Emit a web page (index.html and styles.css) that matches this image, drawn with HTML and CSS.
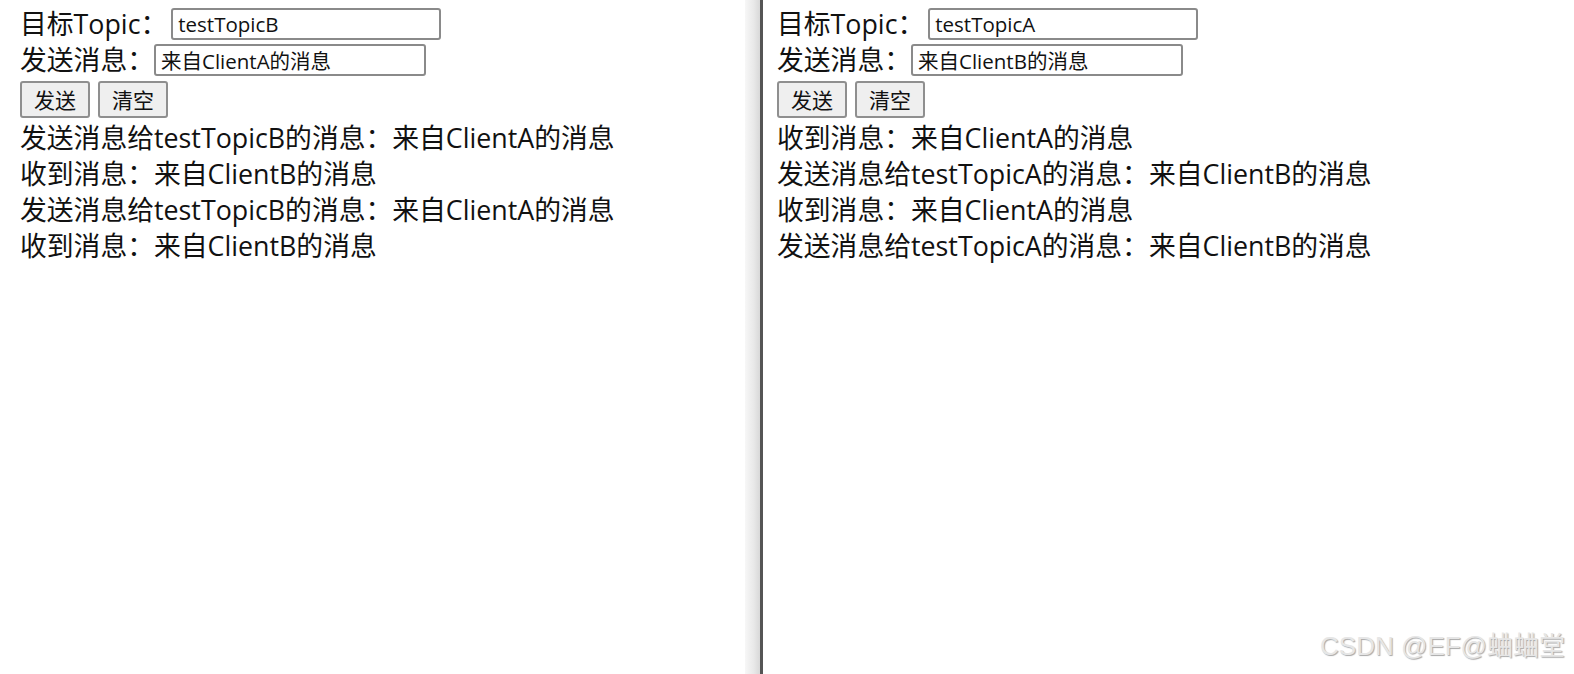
FILE: index.html
```html
<!DOCTYPE html>
<html lang="zh">
  <head>
    <meta charset="utf-8" />
    <meta name="viewport" content="width=device-width, initial-scale=1.0" />
    <title>MQTT Topic</title>
    <link rel="stylesheet" href="styles.css">
  </head>

  <body>
    <div class="screen">
      <!-- ______CLIENT A______ -->
      <section class="client client-a">
        <div class="row">
          <label>目标Topic：</label>
          <input class="topic" type="text" value="testTopicB" />
        </div>
        <div class="row">
          <label>发送消息：</label>
          <input class="msg" type="text" value="来自ClientA的消息" />
        </div>
        <div class="row knapper">
          <button>发送</button>
          <button>清空</button>
        </div>
        <div class="log">
          <p>发送消息给testTopicB的消息：来自ClientA的消息</p>
          <p>收到消息：来自ClientB的消息</p>
          <p>发送消息给testTopicB的消息：来自ClientA的消息</p>
          <p>收到消息：来自ClientB的消息</p>
        </div>
      </section>

      <div class="skygge"></div>
      <div class="streg"></div>

      <!-- ______CLIENT B______ -->
      <section class="client client-b">
        <div class="row">
          <label>目标Topic：</label>
          <input class="topic" type="text" value="testTopicA" />
        </div>
        <div class="row">
          <label>发送消息：</label>
          <input class="msg" type="text" value="来自ClientB的消息" />
        </div>
        <div class="row knapper">
          <button>发送</button>
          <button>清空</button>
        </div>
        <div class="log">
          <p>收到消息：来自ClientA的消息</p>
          <p>发送消息给testTopicA的消息：来自ClientB的消息</p>
          <p>收到消息：来自ClientA的消息</p>
          <p>发送消息给testTopicA的消息：来自ClientB的消息</p>
        </div>
      </section>

      <p class="vandmaerke">CSDN @EF@蛐蛐堂</p>
    </div>
  </body>
</html>
```

FILE: styles.css
```css
html,
body {
  margin: 0;
  height: 100%;
  background: white;
}

body {
  font-family: "Open Sans", "Noto Sans CJK SC", sans-serif;
  color: #111;
}

.screen {
  display: flex;
  height: 100%;
  position: relative;
  overflow: hidden;
}

.client {
  padding-top: 6px;
  font-size: 26.8px;
}

.client-a {
  width: 725px;
  padding-left: 20px;
}

.client-b {
  flex: 1;
  padding-left: 14px;
}

.skygge {
  width: 15px;
  background: linear-gradient(to right, #f7f7f7, #e8e8e8 60%, #d8d8d8);
}

.streg {
  width: 3px;
  background: #555;
}

.row {
  display: flex;
  align-items: center;
  height: 36px;
}

label {
  line-height: 36px;
  white-space: nowrap;
}

input {
  box-sizing: border-box;
  height: 32px;
  border: 2px solid #8a8a8a;
  border-radius: 3px;
  padding: 0 5px;
  font-family: inherit;
  font-size: 20.5px;
  color: #111;
}

.topic {
  width: 270px;
  margin-left: 4px;
}

.msg {
  width: 272px;
  margin-left: 0;
}

.knapper {
  height: 42px;
  gap: 8px;
}

button {
  box-sizing: border-box;
  height: 37px;
  width: 70px;
  border: 2px solid #8f8f8f;
  border-radius: 3px;
  background: #efefef;
  font-family: inherit;
  font-size: 21px;
  color: #111;
  padding: 0;
}

.log p {
  margin: 0;
  height: 36px;
  line-height: 36px;
  white-space: nowrap;
}

.vandmaerke {
  position: absolute;
  right: 9px;
  bottom: 12px;
  margin: 0;
  font-family: "Liberation Sans", "Noto Sans CJK SC", sans-serif;
  font-size: 26px;
  color: #e6e6e6;
  text-shadow: 1px 1px 1px #a8a8a8;
}
```
